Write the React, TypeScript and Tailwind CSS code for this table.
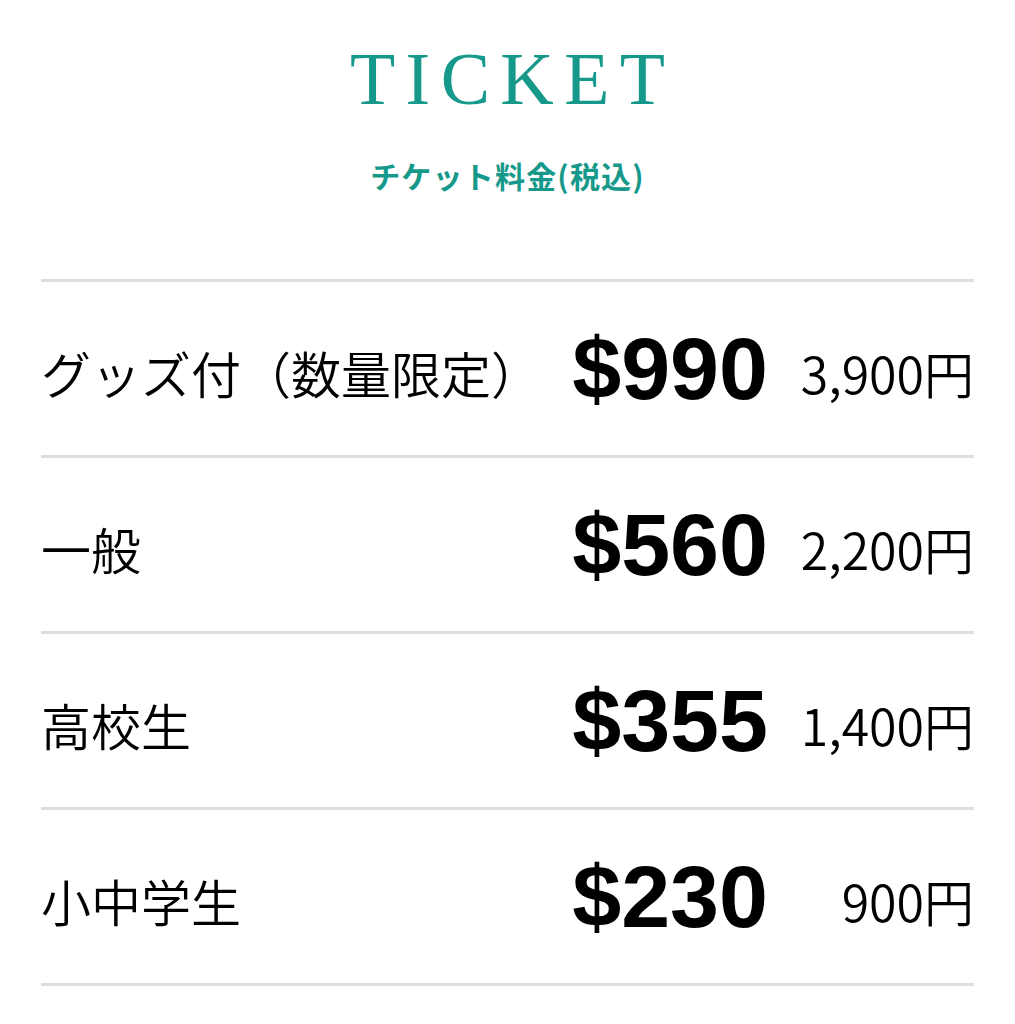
const tickets = [
  { label: 'グッズ付（数量限定）', usd: '$990', yen: '3,900円' },
  { label: '一般', usd: '$560', yen: '2,200円' },
  { label: '高校生', usd: '$355', yen: '1,400円' },
  { label: '小中学生', usd: '$230', yen: '900円' },
]

export default function App() {
  return (
    <section className="min-h-screen bg-white pt-[42px] font-['Noto_Sans_CJK_JP',sans-serif]">
      {/* 見出し */}
      <h2 className="text-center font-['Liberation_Serif',serif] text-[74px] leading-none tracking-[0.14em] pl-[0.14em] text-[#16998b]">
        TICKET
      </h2>
      <p className="mt-[44px] text-center text-[30px] leading-none font-bold tracking-[0.04em] text-[#16998b]">
        チケット料金(税込)
      </p>

      {/* 料金表 */}
      <div className="mt-[89px] mx-[41px] border-t-[3px] border-[#dedede]">
        {tickets.map((t) => (
          <div
            key={t.label}
            className="flex items-center h-[176px] border-b-[3px] border-[#dedede]"
          >
            <span className="flex-1 pt-[6px] text-[50px] leading-none font-[350] text-black whitespace-nowrap">
              {t.label}
            </span>
            <span className="mr-[30px] font-['Liberation_Sans',sans-serif] font-bold text-[88px] leading-none text-black">
              {t.usd}
            </span>
            <span className="w-[176px] pt-[6px] text-right text-[50px] leading-none font-[350] text-black">
              {t.yen}
            </span>
          </div>
        ))}
      </div>
    </section>
  )
}
